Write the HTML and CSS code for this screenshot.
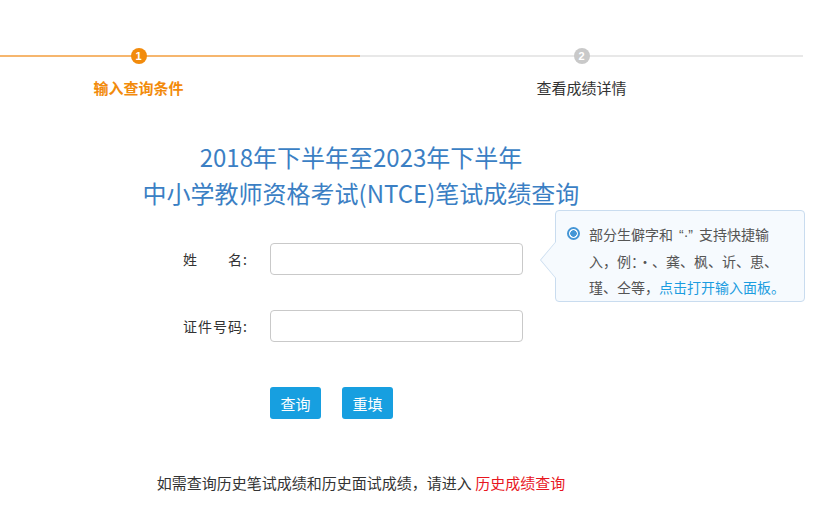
FILE: index.html
```html
<!DOCTYPE html>
<html lang="zh-CN">
<head>
<meta charset="utf-8">
<title>成绩查询</title>
<link rel="stylesheet" href="styles.css">
</head>
<body>
<div class="steps">
  <div class="step step-active">
    <div class="track"><span class="dot">1</span></div>
    <div class="step-label">输入查询条件</div>
  </div>
  <div class="step">
    <div class="track"><span class="dot">2</span></div>
    <div class="step-label">查看成绩详情</div>
  </div>
</div>

<div class="main">
  <h1 class="title">2018年下半年至2023年下半年<br>中小学教师资格考试(NTCE)笔试成绩查询</h1>

  <div class="form">
    <div class="row">
      <label class="label">姓　　名:</label>
      <input class="field" type="text">
      <div class="tip">
        <span class="tip-arrow"></span>
        <span class="radio"></span>
        <p class="tip-text">部分生僻字和<span class="quote">“·”</span>支持快捷输<br>入，例：·、龚、枫、䜣、恵、<br>瑾、仝等，<a class="tip-link" href="#">点击打开输入面板。</a></p>
      </div>
    </div>
    <div class="row">
      <label class="label">证件号码:</label>
      <input class="field" type="text">
    </div>
    <div class="buttons">
      <button class="btn" type="button">查询</button>
      <button class="btn" type="button">重填</button>
    </div>
  </div>

  <p class="history">如需查询历史笔试成绩和历史面试成绩，请进入 <a class="history-link" href="#">历史成绩查询</a></p>
</div>
</body>
</html>
```

FILE: styles.css
```css
html, body {
  margin: 0;
  padding: 0;
  background: #fff;
}
body {
  font-family: "Noto Sans CJK SC", "Microsoft YaHei", sans-serif;
  color: #333;
  width: 823px;
  overflow: hidden;
}

.steps {
  display: flex;
  width: 886px;
  margin-left: -83px;
  padding-top: 48px;
}
.step {
  flex: 1;
  display: flex;
  flex-direction: column;
  align-items: center;
  --line: #e8e8e8;
  --dot: #c9c9c9;
}
.step-active {
  --line: #f6b66e;
  --dot: #f28b0c;
}
.track {
  align-self: stretch;
  height: 16px;
  display: flex;
  justify-content: center;
  background: linear-gradient(to bottom, transparent 7px, var(--line) 7px, var(--line) 9px, transparent 9px);
}
.dot {
  width: 16px;
  height: 16px;
  border-radius: 50%;
  background: var(--dot);
  color: #fff;
  font-size: 11px;
  font-weight: bold;
  line-height: 16px;
  text-align: center;
  font-family: "Liberation Sans", sans-serif;
}
.step-label {
  margin-top: 13px;
  font-size: 15px;
  line-height: 22px;
  color: #333;
}
.step-active .step-label {
  color: #f28b0c;
  font-weight: bold;
}

.main {
  width: 722px;
}
.title {
  margin: 40px 0 0;
  font-size: 24px;
  line-height: 36px;
  font-weight: normal;
  color: #3b7fc4;
  text-align: center;
}

.form {
  margin-top: 32px;
  padding-left: 183px;
}
.row {
  position: relative;
  display: flex;
  align-items: center;
  height: 32px;
  margin-bottom: 35px;
}
.label {
  width: 87px;
  font-size: 14px;
  letter-spacing: 1px;
  color: #333;
  white-space: nowrap;
}
.field {
  box-sizing: border-box;
  width: 253px;
  height: 32px;
  margin: 0;
  border: 1px solid #c9c9c9;
  border-radius: 4px;
  background: #fff;
  outline: none;
}

.tip {
  position: absolute;
  left: 372px;
  top: -33px;
  box-sizing: border-box;
  width: 250px;
  height: 92px;
  border: 1px solid #c9dcef;
  border-radius: 4px;
  background: #f6fafe;
  display: flex;
  align-items: flex-start;
  padding: 10px 0 0 11px;
}
.tip-arrow {
  position: absolute;
  left: -16px;
  top: 30px;
  width: 0;
  height: 0;
  border-top: 19px solid transparent;
  border-bottom: 19px solid transparent;
  border-right: 16px solid #c9dcef;
}
.tip-arrow::after {
  content: "";
  position: absolute;
  left: 1px;
  top: -18px;
  border-top: 18px solid transparent;
  border-bottom: 18px solid transparent;
  border-right: 15px solid #f6fafe;
}
.radio {
  flex: none;
  box-sizing: border-box;
  width: 13px;
  height: 13px;
  margin-top: 6px;
  border: 2px solid #4596d6;
  border-radius: 50%;
  background: radial-gradient(circle, #4596d6 0 3px, #fff 3.5px);
}
.tip-text {
  margin: 0 0 0 9px;
  font-size: 14px;
  line-height: 26px;
  color: #555;
  white-space: nowrap;
}
.quote {
  font-family: "Liberation Sans", sans-serif;
  padding: 0 6px;
}
.tip-link {
  color: #1b9ce0;
  text-decoration: none;
}

.buttons {
  display: flex;
  gap: 21px;
  padding-left: 87px;
  margin-top: 45px;
}
.btn {
  width: 51px;
  height: 32px;
  border: none;
  border-radius: 3px;
  background: #179fe0;
  color: #fff;
  font-family: inherit;
  font-size: 15px;
  padding: 0;
}

.history {
  margin: 54px 0 0;
  text-align: center;
  font-size: 15px;
  line-height: 20px;
  color: #333;
}
.history-link {
  color: #e8161e;
  text-decoration: none;
}
```
